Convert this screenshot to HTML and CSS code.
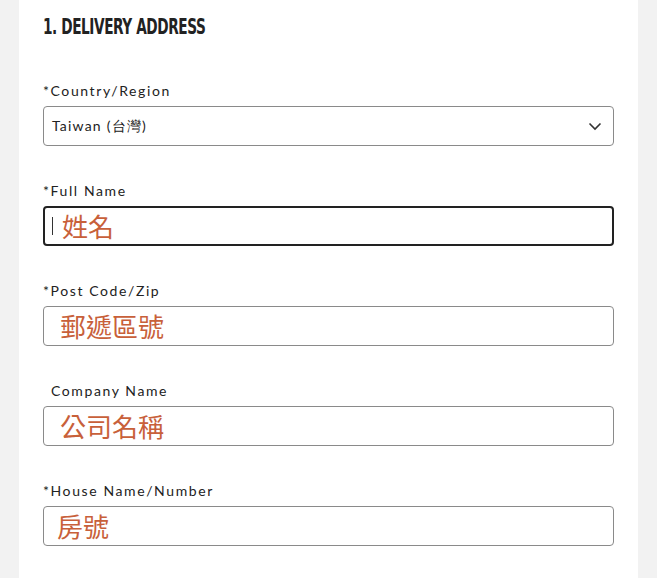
FILE: index.html
```html
<!DOCTYPE html>
<html lang="en">
<head>
<meta charset="utf-8">
<link rel="stylesheet" href="styles.css">
</head>
<body>
<div class="panel">
  <h2 class="title">1. DELIVERY ADDRESS</h2>
  <div class="field">
    <label class="label">*Country/Region</label>
    <div class="box select">
      <span class="select-text">Taiwan (台灣)</span>
      <svg class="chev" width="14" height="9" viewBox="0 0 14 9"><path d="M1.5 1.5 L7 7 L12.5 1.5" fill="none" stroke="#333" stroke-width="1.6"/></svg>
    </div>
  </div>
  <div class="field">
    <label class="label">*Full Name</label>
    <div class="box focus"><span class="caret"></span><span class="val">姓名</span></div>
  </div>
  <div class="field">
    <label class="label">*Post Code/Zip</label>
    <div class="box"><span class="val pad">郵遞區號</span></div>
  </div>
  <div class="field">
    <label class="label indent">Company Name</label>
    <div class="box"><span class="val pad">公司名稱</span></div>
  </div>
  <div class="field">
    <label class="label">*House Name/Number</label>
    <div class="box"><span class="val pad2">房號</span></div>
  </div>
</div>
</body>
</html>
```
FILE: styles.css
```css
html, body { margin: 0; padding: 0; }
body {
  background: #f2f2f2;
  width: 657px;
  height: 578px;
  overflow: hidden;
  font-family: "Lato", "DejaVu Sans", sans-serif;
}
.panel {
  background: #fff;
  margin-left: 19px;
  width: 619px;
  height: 578px;
  box-sizing: border-box;
  padding: 15px 24px 0 24px;
}
.title {
  margin: 0;
  font-family: "DejaVu Sans", sans-serif;
  font-stretch: condensed;
  font-weight: 700;
  font-size: 22px;
  line-height: 24px;
  color: #222;
  letter-spacing: -0.6px;
  transform: scaleX(0.69);
  transform-origin: left center;
  white-space: nowrap;
}
.field { display: flex; flex-direction: column; }
.field:first-of-type { margin-top: 42px; }
.field + .field { margin-top: 35px; }
.label {
  font-size: 14px;
  line-height: 20px;
  letter-spacing: 1.6px;
  color: #222;
  margin-bottom: 5px;
}
.label.indent { padding-left: 8px; }
.box {
  height: 40px;
  box-sizing: border-box;
  border: 1px solid #8a8a8a;
  border-radius: 4px;
  display: flex;
  align-items: center;
  width: 571px;
}
.select { padding: 0 10px 0 8px; justify-content: space-between; }
.select-text { font-size: 14px; letter-spacing: 1.2px; color: #222; padding-top: 1px; }
.chev { margin-right: 1px; }
.focus { border: 2px solid #222; padding-left: 7px; }
.caret { width: 1px; height: 18px; background: #333; margin-right: 9px; }
.val {
  font-family: "Noto Sans CJK TC", "Noto Sans CJK SC", sans-serif;
  font-size: 26px;
  color: #c8603a;
  line-height: 30px;
}
.pad { padding-left: 16px; }
.pad2 { padding-left: 13px; }
```
